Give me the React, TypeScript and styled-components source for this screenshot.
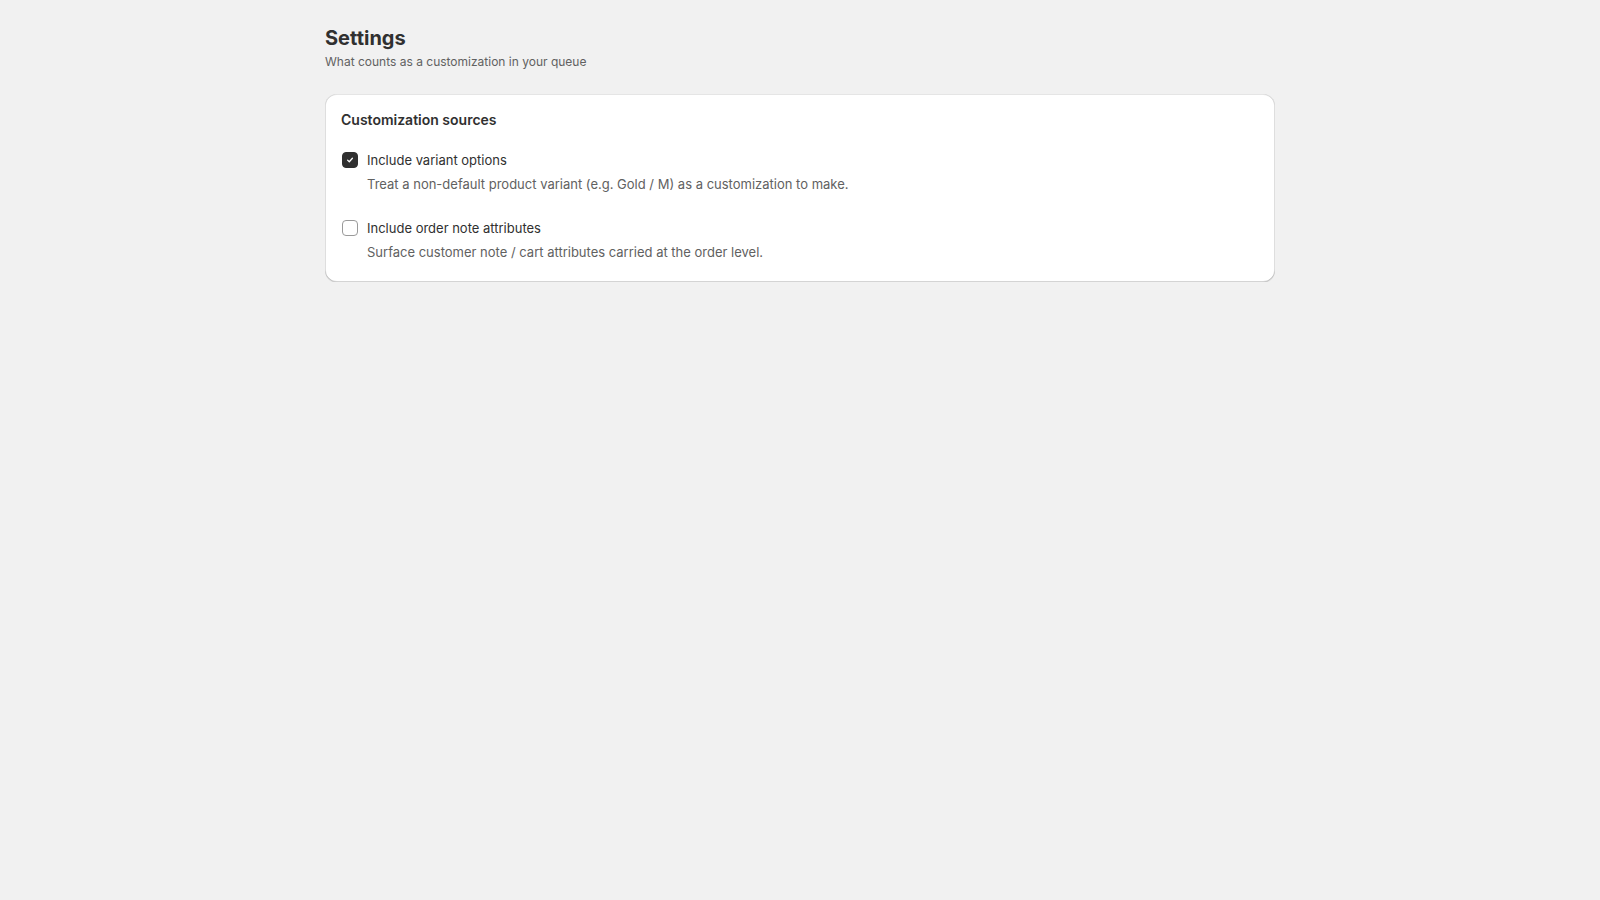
import * as React from "react"
import styled, { createGlobalStyle } from "styled-components"

const GlobalStyle = createGlobalStyle`
  html, body {
    margin: 0;
    padding: 0;
    background: #f1f1f1;
    font-family: Inter, "Noto Sans", "Liberation Sans", sans-serif;
    color: #303030;
    -webkit-font-smoothing: antialiased;
  }
`

type Source = {
  label: string
  help: string
  checked: boolean
}

const sources: Source[] = [
  {
    label: "Include variant options",
    help: "Treat a non-default product variant (e.g. Gold / M) as a customization to make.",
    checked: true,
  },
  {
    label: "Include order note attributes",
    help: "Surface customer note / cart attributes carried at the order level.",
    checked: false,
  },
]

const App = () => {
  const [values, setValues] = React.useState(sources.map((s) => s.checked))

  return (
    <Page>
      <GlobalStyle />
      <Header>
        <Title>Settings</Title>
        <Subtitle>What counts as a customization in your queue</Subtitle>
      </Header>
      <Card>
        <CardTitle>Customization sources</CardTitle>
        <Options>
          {sources.map((s, i) => (
            <Option key={s.label}>
              <Row>
                <Box
                  $checked={values[i]}
                  onClick={() =>
                    setValues((v) => v.map((x, j) => (j === i ? !x : x)))
                  }
                >
                  {values[i] && (
                    <svg width="10" height="10" viewBox="0 0 10 10" fill="none">
                      <path
                        d="M2.6 5.1 L4.3 6.8 L7.4 3.3"
                        stroke="#fff"
                        strokeWidth="1.3"
                        strokeLinecap="round"
                        strokeLinejoin="round"
                      />
                    </svg>
                  )}
                </Box>
                <Label>{s.label}</Label>
              </Row>
              <Help>{s.help}</Help>
            </Option>
          ))}
        </Options>
      </Card>
    </Page>
  )
}

export default App

const Page = styled.div`
  max-width: 950px;
  margin: 0 auto;
  padding-top: 26px;
`

const Header = styled.div`
  display: flex;
  flex-direction: column;
  gap: 2px;
  margin-bottom: 22px;
`

const Title = styled.h1`
  margin: 0;
  font-size: 20px;
  line-height: 24px;
  font-weight: 700;
  color: #303030;
`

const Subtitle = styled.p`
  margin: 0;
  font-size: 12px;
  line-height: 20px;
  color: #616161;
`

const Card = styled.div`
  background: #ffffff;
  border-radius: 12px;
  padding: 16px 16px 20px;
  box-shadow: 0 1px 0 0 rgba(26, 26, 26, 0.07),
    inset 0 1px 0 0 rgba(204, 204, 204, 0.5),
    inset 0 -1px 0 0 rgba(0, 0, 0, 0.17),
    inset 1px 0 0 0 rgba(0, 0, 0, 0.13),
    inset -1px 0 0 0 rgba(0, 0, 0, 0.13);
`

const CardTitle = styled.h2`
  margin: 0 0 20px;
  font-size: 14px;
  line-height: 20px;
  font-weight: 600;
  color: #303030;
`

const Options = styled.div`
  display: flex;
  flex-direction: column;
  gap: 24px;
`

const Option = styled.div`
  display: flex;
  flex-direction: column;
  gap: 4px;
`

const Row = styled.div`
  display: flex;
  align-items: center;
  gap: 9px;
  padding-left: 1px;
`

const Box = styled.span<{ $checked: boolean }>`
  box-sizing: border-box;
  width: 16px;
  height: 16px;
  border-radius: 4px;
  display: flex;
  align-items: center;
  justify-content: center;
  cursor: pointer;
  background: ${(p) => (p.$checked ? "#303030" : "#ffffff")};
  border: 1px solid ${(p) => (p.$checked ? "#303030" : "#9a9a9a")};
`

const Label = styled.span`
  font-size: 13px;
  line-height: 20px;
  color: #303030;
`

const Help = styled.p`
  margin: 0;
  padding-left: 26px;
  font-size: 13px;
  line-height: 20px;
  color: #616161;
`
